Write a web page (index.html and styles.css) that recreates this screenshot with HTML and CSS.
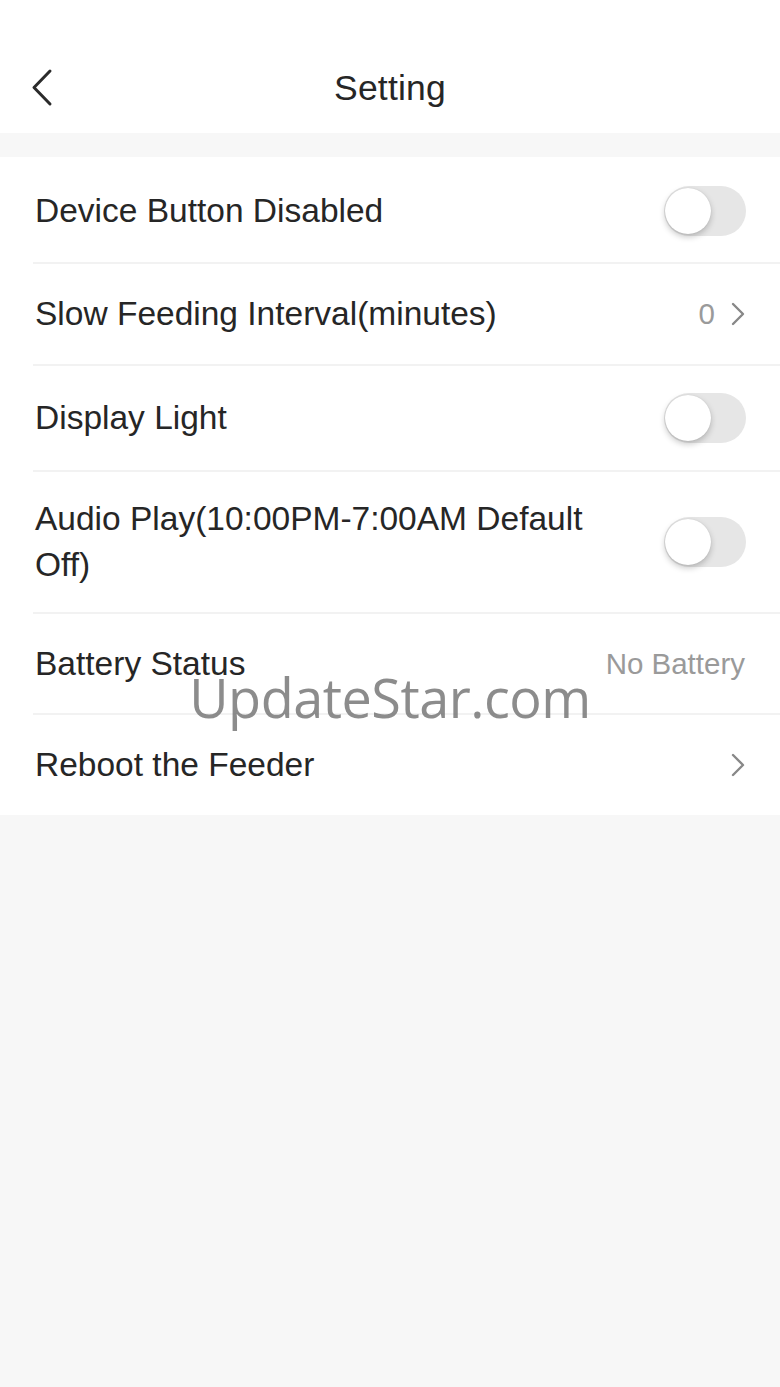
FILE: index.html
```html
<!DOCTYPE html>
<html>
<head>
<meta charset="utf-8">
<link rel="stylesheet" href="styles.css">
</head>
<body>
<div class="page">
  <header class="topbar">
    <span class="back">
      <svg width="24" height="40" viewBox="0 0 24 40"><polyline points="19,3 3,19.5 19,36" fill="none" stroke="#2b2b2b" stroke-width="3" stroke-linecap="round" stroke-linejoin="round"/></svg>
    </span>
    <h1 class="title">Setting</h1>
  </header>
  <div class="gap"></div>
  <ul class="list">
    <li class="row r1">
      <span class="label">Device Button Disabled</span>
      <span class="toggle"><span class="knob"></span></span>
    </li>
    <li class="row r2">
      <span class="label">Slow Feeding Interval(minutes)</span>
      <span class="value">0
        <svg class="chev" width="14" height="24" viewBox="0 0 14 24"><polyline points="2,2 12,12 2,22" fill="none" stroke="#888" stroke-width="2.4" stroke-linecap="round" stroke-linejoin="round"/></svg>
      </span>
    </li>
    <li class="row r3">
      <span class="label">Display Light</span>
      <span class="toggle"><span class="knob"></span></span>
    </li>
    <li class="row r4">
      <span class="label">Audio Play(10:00PM-7:00AM Default Off)</span>
      <span class="toggle"><span class="knob"></span></span>
    </li>
    <li class="row r5">
      <span class="label">Battery Status</span>
      <span class="value">No Battery</span>
    </li>
    <li class="row r6 last">
      <span class="label">Reboot the Feeder</span>
      <span class="value">
        <svg class="chev" width="14" height="24" viewBox="0 0 14 24"><polyline points="2,2 12,12 2,22" fill="none" stroke="#888" stroke-width="2.4" stroke-linecap="round" stroke-linejoin="round"/></svg>
      </span>
    </li>
  </ul>
  <div class="watermark">UpdateStar.com</div>
</div>
</body>
</html>
```
FILE: styles.css
```css
* { box-sizing: border-box; }
html, body { margin: 0; padding: 0; }
body {
  background: #f7f7f7;
  font-family: "Liberation Sans", Arial, sans-serif;
  color: #262626;
  width: 780px;
  height: 1387px;
  overflow: hidden;
}
.page { position: relative; }
.topbar {
  height: 133px;
  background: #fff;
  position: relative;
  display: flex;
  align-items: center;
  justify-content: center;
  padding-top: 44px;
}
.back {
  position: absolute;
  left: 31px;
  top: 68px;
  display: block;
  line-height: 0;
}
.title {
  margin: 0;
  font-size: 35.5px;
  font-weight: normal;
  color: #262626;
  letter-spacing: 0.2px;
}
.gap { height: 24px; }
.list {
  list-style: none;
  margin: 0;
  padding: 0 0 0 33px;
  background: #fff;
}
.row {
  display: flex;
  align-items: center;
  justify-content: space-between;
  gap: 40px;
  padding-right: 35px;
  border-bottom: 2px solid #f2f2f2;
}
.row.last { border-bottom: none; }
.r1 { height: 107px; padding-top: 3px; }
.r2 { height: 102px; }
.r3 { height: 106px; }
.r4 { height: 142px; }
.r5 { height: 101px; }
.r6 { height: 100px; }
.label {
  font-size: 33.5px;
  line-height: 46px;
  padding-left: 2px;
  color: #262626;
}
.value {
  font-size: 29.5px;
  color: #9a9a9a;
  display: flex;
  align-items: center;
  gap: 16px;
  white-space: nowrap;
}
.chev { display: block; }
.toggle {
  flex: none;
  width: 82px;
  height: 50px;
  border-radius: 25px;
  background: #e6e6e6;
  position: relative;
  margin-right: -1px;
}
.knob {
  position: absolute;
  left: 1px;
  top: 2px;
  width: 46px;
  height: 46px;
  border-radius: 50%;
  background: #fff;
  box-shadow: 0 3px 6px rgba(0,0,0,0.22), 0 0 1px rgba(0,0,0,0.15);
}
.watermark {
  position: absolute;
  left: 0;
  right: 0;
  top: 660px;
  text-align: center;
  font-family: "Open Sans", "Liberation Sans", sans-serif;
  font-size: 54px;
  color: rgba(120,120,120,0.85);
  pointer-events: none;
  letter-spacing: -0.5px;
}
```
